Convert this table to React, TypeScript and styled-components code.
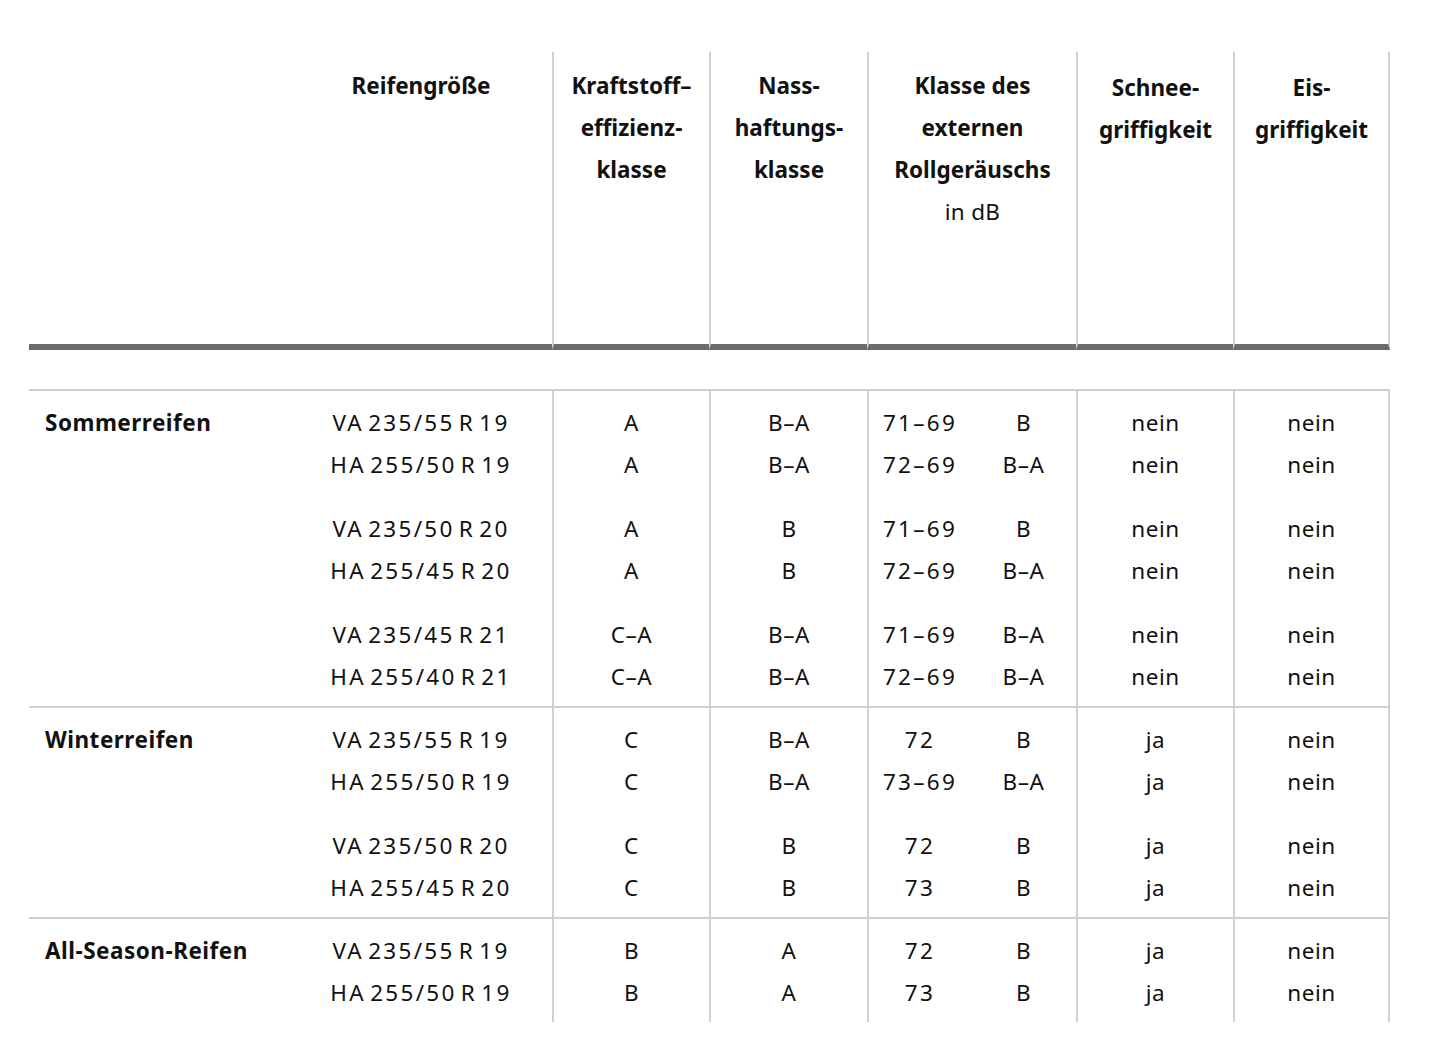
import React from "react";
import styled, { createGlobalStyle } from "styled-components";

const GlobalStyle = createGlobalStyle`
  html, body {
    margin: 0;
    padding: 0;
    background: #ffffff;
  }
  body {
    font-family: "Noto Sans", "Open Sans", sans-serif;
    color: #111111;
  }
`;

const Page = styled.div`
  padding: 52px 0 0 29px;
`;

const Table = styled.table`
  table-layout: fixed;
  width: 1361px;
  border-collapse: separate;
  border-spacing: 0;
  font-size: 22.5px;
`;

const LINE = "#cfcfcf";

const HeadCell = styled.th<{ $rule?: boolean; $last?: boolean; $drop?: number }>`
  box-sizing: border-box;
  height: 298px;
  vertical-align: top;
  text-align: center;
  padding: ${(p) => 13 + (p.$drop ?? 0)}px 0 0 0;
  font-weight: 700;
  line-height: 42px;
  letter-spacing: 0;
  border-bottom: 6px solid #6b6b6b;
  border-left: ${(p) => (p.$rule ? `2px solid ${LINE}` : "none")};
  border-right: ${(p) => (p.$last ? `2px solid ${LINE}` : "none")};
`;

const Unit = styled.span`
  font-weight: 400;
  letter-spacing: 0.3px;
`;

const SpacerCell = styled.td`
  height: 39px;
  padding: 0;
`;

type Pos = "first" | "pair" | "mid";

const Cell = styled.td<{
  $rule?: boolean;
  $last?: boolean;
  $top?: boolean;
  $pos: Pos;
  $end?: boolean;
  $align?: "left" | "center";
  $bold?: boolean;
  $wide?: boolean;
}>`
  box-sizing: content-box;
  padding: ${(p) => (p.$pos === "first" ? 11 : p.$pos === "pair" ? 22 : 0)}px
    0 ${(p) => (p.$end ? 8 : 0)}px ${(p) => (p.$align === "left" ? 16 : 0)}px;
  line-height: 42px;
  height: 42px;
  vertical-align: top;
  white-space: nowrap;
  text-align: ${(p) => p.$align ?? "center"};
  font-weight: ${(p) => (p.$bold ? 700 : 400)};
  letter-spacing: ${(p) => (p.$bold ? "0.5px" : p.$wide ? "2.3px" : "0.6px")};
  word-spacing: ${(p) => (p.$wide ? "-4px" : "0")};
  border-top: ${(p) => (p.$top ? `2px solid ${LINE}` : "none")};
  border-left: ${(p) => (p.$rule ? `2px solid ${LINE}` : "none")};
  border-right: ${(p) => (p.$last ? `2px solid ${LINE}` : "none")};
`;

type Row = {
  size: string;
  fuel: string;
  wet: string;
  db: string;
  noise: string;
  snow: string;
  ice: string;
  pairStart?: boolean;
};

type Group = { name: string; rows: Row[] };

const groups: Group[] = [
  {
    name: "Sommerreifen",
    rows: [
      { size: "VA 235/55 R 19", fuel: "A", wet: "B–A", db: "71–69", noise: "B", snow: "nein", ice: "nein" },
      { size: "HA 255/50 R 19", fuel: "A", wet: "B–A", db: "72–69", noise: "B–A", snow: "nein", ice: "nein" },
      { size: "VA 235/50 R 20", fuel: "A", wet: "B", db: "71–69", noise: "B", snow: "nein", ice: "nein", pairStart: true },
      { size: "HA 255/45 R 20", fuel: "A", wet: "B", db: "72–69", noise: "B–A", snow: "nein", ice: "nein" },
      { size: "VA 235/45 R 21", fuel: "C–A", wet: "B–A", db: "71–69", noise: "B–A", snow: "nein", ice: "nein", pairStart: true },
      { size: "HA 255/40 R 21", fuel: "C–A", wet: "B–A", db: "72–69", noise: "B–A", snow: "nein", ice: "nein" },
    ],
  },
  {
    name: "Winterreifen",
    rows: [
      { size: "VA 235/55 R 19", fuel: "C", wet: "B–A", db: "72", noise: "B", snow: "ja", ice: "nein" },
      { size: "HA 255/50 R 19", fuel: "C", wet: "B–A", db: "73–69", noise: "B–A", snow: "ja", ice: "nein" },
      { size: "VA 235/50 R 20", fuel: "C", wet: "B", db: "72", noise: "B", snow: "ja", ice: "nein", pairStart: true },
      { size: "HA 255/45 R 20", fuel: "C", wet: "B", db: "73", noise: "B", snow: "ja", ice: "nein" },
    ],
  },
  {
    name: "All-Season-Reifen",
    rows: [
      { size: "VA 235/55 R 19", fuel: "B", wet: "A", db: "72", noise: "B", snow: "ja", ice: "nein" },
      { size: "HA 255/50 R 19", fuel: "B", wet: "A", db: "73", noise: "B", snow: "ja", ice: "nein" },
    ],
  },
];

const widths = [261, 262, 157, 158, 104, 105, 157, 157];

export default function App() {
  return (
    <>
      <GlobalStyle />
      <Page>
        <Table>
          <colgroup>
            {widths.map((w, i) => (
              <col key={i} style={{ width: w }} />
            ))}
          </colgroup>
          <thead>
            <tr>
              <HeadCell />
              <HeadCell>Reifengröße</HeadCell>
              <HeadCell $rule>
                Kraftstoff–
                <br />
                effizienz-
                <br />
                klasse
              </HeadCell>
              <HeadCell $rule>
                Nass-
                <br />
                haftungs-
                <br />
                klasse
              </HeadCell>
              <HeadCell $rule colSpan={2}>
                Klasse des
                <br />
                externen
                <br />
                Rollgeräuschs
                <br />
                <Unit>in dB</Unit>
              </HeadCell>
              <HeadCell $rule $drop={2}>
                Schnee-
                <br />
                griffigkeit
              </HeadCell>
              <HeadCell $rule $last $drop={2}>
                Eis-
                <br />
                griffigkeit
              </HeadCell>
            </tr>
            <tr>
              <SpacerCell colSpan={8} />
            </tr>
          </thead>
          {groups.map((g) => (
            <tbody key={g.name}>
              {g.rows.map((r, i) => {
                const top = i === 0;
                const pos: Pos = top ? "first" : r.pairStart ? "pair" : "mid";
                const end = i === g.rows.length - 1;
                const common = { $top: top, $pos: pos, $end: end };
                return (
                  <tr key={i}>
                    <Cell {...common} $align="left" $bold>
                      {top ? g.name : ""}
                    </Cell>
                    <Cell {...common} $wide>
                      {r.size}
                    </Cell>
                    <Cell {...common} $rule>
                      {r.fuel}
                    </Cell>
                    <Cell {...common} $rule>
                      {r.wet}
                    </Cell>
                    <Cell {...common} $rule $wide>
                      {r.db}
                    </Cell>
                    <Cell {...common}>{r.noise}</Cell>
                    <Cell {...common} $rule>
                      {r.snow}
                    </Cell>
                    <Cell {...common} $rule $last>
                      {r.ice}
                    </Cell>
                  </tr>
                );
              })}
            </tbody>
          ))}
        </Table>
      </Page>
    </>
  );
}
